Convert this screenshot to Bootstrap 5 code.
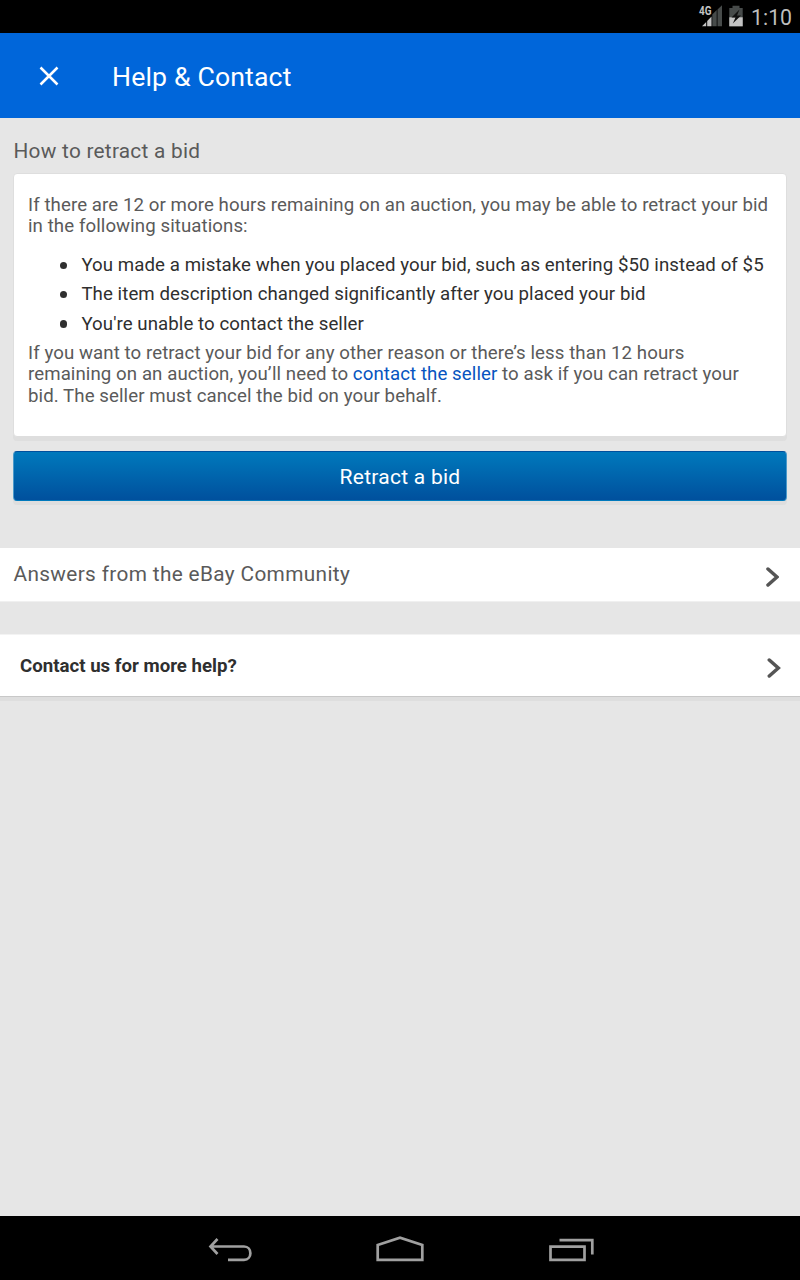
<!DOCTYPE html>
<html lang="en">
<head>
<meta charset="utf-8">
<meta name="viewport" content="width=device-width, initial-scale=1">
<title>Help &amp; Contact</title>
<link href="https://cdn.jsdelivr.net/npm/bootstrap@5.3.0/dist/css/bootstrap.min.css" rel="stylesheet">
<style>
  body { font-family: Roboto, sans-serif; background: #e6e6e6; color: #5a5a5a; font-size: 18.67px; line-height: 21.33px; }
  svg { display: block; flex: none; }
  .status-bar { height: 33px; background: #000; padding-right: 8px; color: #bdbdbd; }
  .clock { width: 41px; font-size: 21.3px; line-height: 33px; padding-top: 1px; text-align: right; }
  .app-bar { height: 85px; background: #0066da; padding-left: 39px; }
  .app-title { font-size: 26.67px; line-height: 32px; font-weight: 400; letter-spacing: .14px; margin-left: 53px; padding-top: 3px; }
  .heading { font-size: 20.8px; line-height: 26px; font-weight: 400; letter-spacing: .3px; }
  .topic { padding: 20px 14px 9px 13.5px; letter-spacing: .26px; }
  .answer { height: 264px; margin: 0 13px; padding: 20px 0 0 14px; border: 1px solid #dedede; border-radius: 4px; box-shadow: 0 4px 0 #dedede; white-space: nowrap; letter-spacing: .075px; }
  .answer p { padding-top: 1px; }
  .answer .closing { padding-top: 0; line-height: 21.5px; }
  .answer ul { color: #2f2f2f; padding-left: 32px; margin: 17px 0 8px; letter-spacing: .07px; }
  .answer li { margin-bottom: 8.1px; }
  .dot { width: 7.4px; height: 7.4px; margin-right: 14px; background: #2f2f2f; }
  .answer a { color: #0654c0; }
  .retract { height: 50px; margin: 14px 13px 0; border: 1px solid #4b9aca; border-top-color: #00509d; border-bottom-color: #0079bc; border-radius: 4px; background: linear-gradient(#0079bc, #00509d); box-shadow: 0 4px 0 #dedede; font-size: 21px; letter-spacing: .25px; }
  .community { height: 54px; margin-top: 47px; padding: 0 21px 0 13.5px; border-bottom: 1px solid #f0f0f0; }
  .community .heading { letter-spacing: .35px; padding-bottom: 2px; }
  .contact { height: 62px; margin-top: 32px; padding: 0 19px 0 20px; border-top: 1px solid #f3f3f3; box-shadow: 0 1px 0 #c8c8c8, 0 5px 0 #dedede; color: #2f2f2f; }
  .contact strong { padding-top: 2px; }
  .nav-keys { height: 64px; background: #000; }
</style>
</head>
<body class="d-flex flex-column min-vh-100">
<div class="status-bar d-flex justify-content-end">
  <svg width="53" height="33" viewBox="698 0 53 33">
    <path d="M712.300 14.500L716.700 10V26.300H712.300zM717.500 9.500L722 5.300V26.300H717.500z" fill="#474b4a"/>
    <path d="M702 26.300L706.200 22V26.300zM707.200 21L711.500 16.500V26.300H707.200z" fill="#c4c4c4"/>
    <text x="699" y="15" font-family="Roboto" font-size="12.500" font-weight="700" fill="#c4c4c4" textLength="12.500" lengthAdjust="spacingAndGlyphs">4G</text>
    <path d="M729.300 8H732.500V5.700H739.500V8H742.700V26.300H729.300z" fill="#474b4a"/>
    <path d="M729.300 17.300H742.700V26.300H729.300z" fill="#c4c4c4"/>
    <path d="M739.500 9.500L731.500 17.500H735.500L732.800 23.500L741 15.500H737z" fill="#111"/>
  </svg>
  <span class="clock">1:10</span>
</div>
<header class="app-bar d-flex align-items-center text-white">
  <svg width="20" height="20" viewBox="0 0 20 20" fill="none" stroke="#fff" stroke-width="2.500"><path d="M1.500 1.500L18.500 18.500M18.500 1.500L1.500 18.500"/></svg>
  <h1 class="app-title mb-0">Help &amp; Contact</h1>
</header>
<main class="flex-grow-1">
  <h2 class="heading topic mb-0">How to retract a bid</h2>
  <section class="answer bg-white">
    <p class="mb-0">If there are 12 or more hours remaining on an auction, you may be able to retract your bid<br>in the following situations:</p>
    <ul class="list-unstyled">
      <li class="d-flex align-items-center"><span class="dot rounded-circle"></span>You made a mistake when you placed your bid, such as entering $50 instead of $5</li>
      <li class="d-flex align-items-center"><span class="dot rounded-circle"></span>The item description changed significantly after you placed your bid</li>
      <li class="d-flex align-items-center"><span class="dot rounded-circle"></span>You're unable to contact the seller</li>
    </ul>
    <p class="closing mb-0">If you want to retract your bid for any other reason or there’s less than 12 hours<br>remaining on an auction, you’ll need to <a href="#" class="text-decoration-none">contact the seller</a> to ask if you can retract your<br>bid. The seller must cancel the bid on your behalf.</p>
  </section>
  <div class="d-grid"><button type="button" class="retract text-white p-0 pt-1">Retract a bid</button></div>
  <div class="community bg-white d-flex align-items-center justify-content-between">
    <h2 class="heading mb-0">Answers from the eBay Community</h2>
    <svg class="mt-1" width="14" height="20" viewBox="0 0 14 20" fill="none" stroke="#555" stroke-width="3.500" stroke-linecap="round"><path d="M3 2L12 10L3 18"/></svg>
  </div>
  <div class="contact bg-white d-flex align-items-center justify-content-between">
    <strong>Contact us for more help?</strong>
    <svg class="mt-1" width="14" height="20" viewBox="0 0 14 20" fill="none" stroke="#555" stroke-width="3.500" stroke-linecap="round"><path d="M2.300 2L11.300 10L2.300 18"/></svg>
  </div>
</main>
<footer class="nav-keys">
  <svg width="800" height="64" viewBox="0 0 800 64" fill="none" stroke="#a0a0a0" stroke-width="2.700">
    <path d="M211 30.500H244C252.500 30.500 252.500 43.800 244 43.800H228M217.500 23L210.500 30.500L217.500 38"/>
    <path d="M377.700 29L400 21.700L422.300 29V43.800H377.700z"/>
    <path d="M550.500 30.700H584.500V43.800H550.500zM559.500 24.200H592.300V38.500"/>
  </svg>
</footer>
<script src="https://cdn.jsdelivr.net/npm/bootstrap@5.3.0/dist/js/bootstrap.bundle.min.js"></script>
</body>
</html>
